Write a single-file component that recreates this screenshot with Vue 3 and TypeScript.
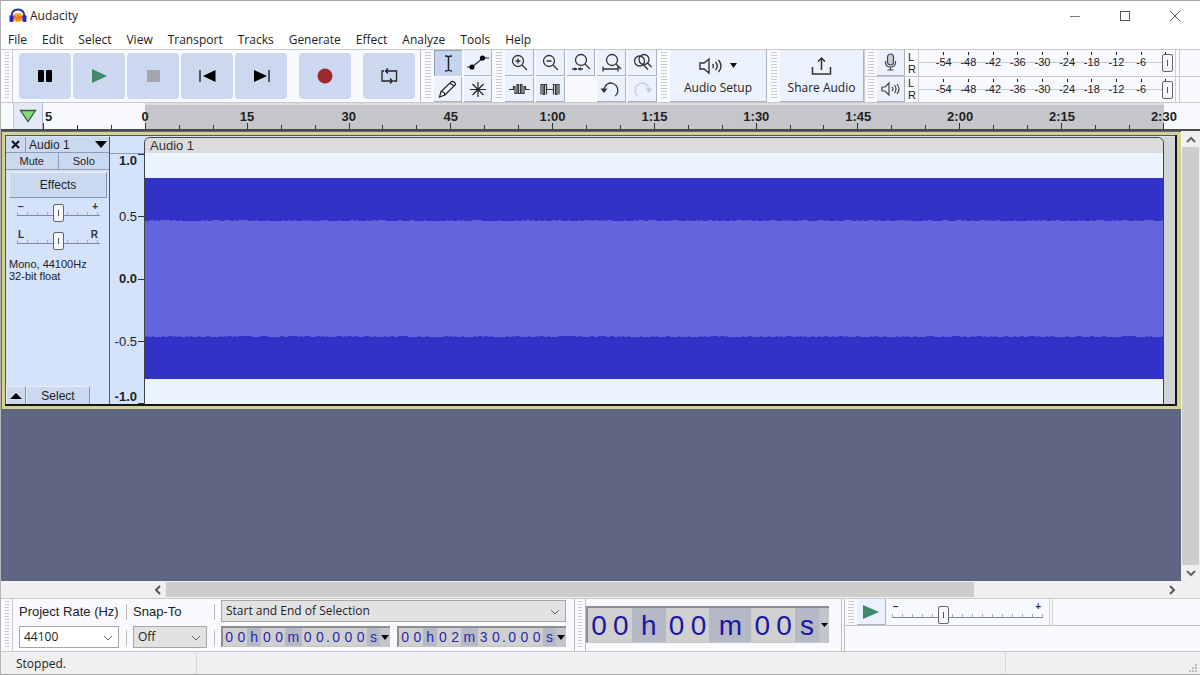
<script setup lang="ts">
import { ref } from 'vue'

const menus = ['File', 'Edit', 'Select', 'View', 'Transport', 'Tracks', 'Generate', 'Effect', 'Analyze', 'Tools', 'Help']

const transport = ['Pause', 'Play', 'Stop', 'Skip to Start', 'Skip to End', 'Record', 'Loop']
const tools = ['Selection Tool', 'Envelope Tool', 'Draw Tool', 'Multi-Tool']
const edits = ['Zoom In', 'Zoom Out', 'Fit Selection', 'Fit Project', 'Zoom Toggle', 'Trim', 'Silence', '', 'Undo', 'Redo']

const meterScale = ['', '-54', '-48', '-42', '-36', '-30', '-24', '-18', '-12', '-6', '0']
const meters = [
  { id: 'rec', name: 'Record meter', level: ref(100) },
  { id: 'play', name: 'Playback meter', level: ref(100) },
]

const timeLabels = ['0', '15', '30', '45', '1:00', '1:15', '1:30', '1:45', '2:00', '2:15', '2:30']
const timeTicks = Array.from({ length: 31 }, (_, i) => i % 3 === 0)
const ampLabels = ['1.0', '0.5', '0.0', '-0.5', '-1.0']

interface Cell { text: string; kind: 'd' | 'u' | 'p' }
function cells(value: string): Cell[] {
  return value.split('').map((c) => ({
    text: c,
    kind: c === '.' ? 'p' : /\d/.test(c) ? 'd' : 'u',
  }))
}
const selStart = cells('00h00m00.000s')
const selEnd = cells('00h02m30.000s')
const position = cells('00h00m00s')

const gain = ref(50)
const pan = ref(50)
const speed = ref(33)

function rmsShape(): string {
  const top: string[] = []
  const bottom: string[] = []
  for (let x = 0; x <= 1020; x += 2) {
    const n = Math.abs(Math.sin(x * 12.9898) * 43758.5453) % 1
    const m = Math.abs(Math.sin(x * 78.233) * 12543.123) % 1
    top.push(`${x},${n > 0.6 ? 67 : 68}`)
    bottom.unshift(`${x},${m > 0.6 ? 183 : 184}`)
  }
  return [...top, ...bottom].join(' ')
}
const rms = rmsShape()
</script>

<template>
  <div class="window">
    <header class="title">
      <svg class="logo" width="18" height="16" viewBox="0 0 18 16">
        <ellipse cx="9" cy="9.500" rx="6" ry="4.500" fill="#f9b02c" />
        <path d="M4 10.500l2-2 1.500 3L9 8l1.500 3.500 1.500-3 2 2" fill="none" stroke="#ee6a1c" stroke-width="1.500" />
        <path d="M2.500 9C2.500 4 5 1.500 9 1.500S15.500 4 15.500 9" fill="none" stroke="#2f3694" stroke-width="1.800" />
        <rect x="0.500" y="7" width="4" height="7" rx="1.500" fill="#2424d0" />
        <rect x="13.500" y="7" width="4" height="7" rx="1.500" fill="#2424d0" />
      </svg>
      <h1>Audacity</h1>
      <div class="controls">
        <button aria-label="Minimize"><svg width="12" height="12"><path d="M1 6.500h10" stroke="#777" /></svg></button>
        <button aria-label="Maximize"><svg width="12" height="12"><rect x="1.500" y="1.500" width="9" height="9" fill="none" stroke="#555" /></svg></button>
        <button aria-label="Close"><svg width="12" height="12"><path d="M1 1l10 10M11 1L1 11" stroke="#555" /></svg></button>
      </div>
    </header>

    <nav class="menu">
      <button v-for="m in menus" :key="m">{{ m }}</button>
    </nav>

    <section class="toolbars">
      <div class="group transport">
        <i class="grip first"></i>
        <div class="transport-buttons">
          <button v-for="(t, i) in transport" :key="t" :aria-label="t" :class="{ apart: i > 4 }">
            <svg width="20" height="20" viewBox="0 0 20 20">
              <template v-if="i === 0"><rect x="3" y="4" width="6" height="12" rx="1" /><rect x="11" y="4" width="6" height="12" rx="1" /></template>
              <path v-else-if="i === 1" d="M3 3l15 7-15 7z" fill="#3d8b6b" />
              <rect v-else-if="i === 2" x="4" y="4" width="13" height="12" fill="#a3a6ad" />
              <template v-else-if="i === 3"><path d="M18.500 4v12L6 10z" /><path d="M3 4v12" stroke="#111" stroke-width="1.300" /></template>
              <template v-else-if="i === 4"><path d="M3 4v12l13-6z" /><path d="M18 4v12" stroke="#111" stroke-width="1.300" /></template>
              <circle v-else-if="i === 5" cx="10" cy="10" r="7.500" fill="#9c2a2c" />
              <path v-else d="M7 5h10.500v10h-3M13 15H3V5h2M9 2.500L6.500 5 9 7.500M11 12.500l2.500 2.500-2.500 2.500" fill="none" stroke="#222" stroke-width="1.300" />
            </svg>
          </button>
        </div>
      </div>

      <div class="group">
        <i class="grip"></i>
        <div class="grid tools">
          <button v-for="(t, i) in tools" :key="t" :aria-label="t" :class="{ down: i === 0 }">
            <svg width="24" height="22" viewBox="0 0 24 22" fill="none" stroke="#222" stroke-width="1.500">
              <path v-if="i === 0" d="M8 4q3 0 3.500 1 .5-1 3.500-1M8 19q3 0 3.500-1 .5 1 3.500 1M11.500 5v13" />
              <template v-else-if="i === 1"><path d="M1 16h5L17 7h6" stroke-width="1.200" /><circle cx="6" cy="16" r="2.600" fill="#000" stroke="none" /><circle cx="16.500" cy="7" r="2.600" fill="#000" stroke="none" /></template>
              <path v-else-if="i === 2" d="M3.500 19l1.500-5.500L15.500 3.500q3.500-.5 4 3L9 17zM5 13.500q3.500 0 4 3.500M13.500 5.500q3.500 0 4 3.500" stroke-width="1.200" />
              <path v-else d="M12 4v15M4 11.500h16M6.500 6l11 11M17.500 6l-11 11" stroke-width="1.200" />
            </svg>
          </button>
        </div>
      </div>

      <div class="group">
        <i class="grip"></i>
        <div class="grid edits">
          <template v-for="(t, i) in edits" :key="i">
            <span v-if="!t"></span>
            <button v-else :aria-label="t">
              <svg width="24" height="22" viewBox="0 0 24 22" fill="none" stroke="#333" stroke-width="1.300">
                <template v-if="i < 2"><circle cx="11" cy="10" r="5.500" /><path d="M15 14l5 5M8.500 10h5" /><path v-if="i === 0" d="M11 7.500v5" /></template>
                <template v-else-if="i === 2"><circle cx="13" cy="9" r="5.500" /><path d="M17 13l5 5M4 18h5M10 18h5" /><path d="M9 18l-2.500-2v4zM10 18l2.500-2v4z" fill="#333" stroke="none" /></template>
                <template v-else-if="i === 3"><circle cx="13" cy="9" r="5.500" /><path d="M17 13l5 5M4 15.500v5M4 18h15M19 15.500v5" /></template>
                <template v-else-if="i === 4"><circle cx="14" cy="8.500" r="5" /><circle cx="9.500" cy="10" r="5" /><path d="M13 13.500l5 5M17.500 12l4 4" /></template>
                <path v-else-if="i === 5" d="M2 11.500h4.500v-3h1.500v7h2v-9h1.500v9h2v-9h1.500v9h2v-7h1.500v3h4" stroke-width="1.200" />
                <path v-else-if="i === 6" d="M3 16.500v-10h2v10h1.500v-10h2v10M8.500 11.500h7M15.500 16.500v-10h2v10h1.500v-10h2v10" stroke-width="1.200" />
                <template v-else-if="i === 8"><path d="M5 12C6 6 10 4 14 5.500C20 8 20 15 16 18" /><path d="M1.500 10.500h7L5 15z" fill="#333" stroke="none" /></template>
                <g v-else stroke="#c6ccd6"><path d="M19 12C18 6 14 4 10 5.500C4 8 4 15 8 18" /><path d="M22.500 10.500h-7L19 15z" fill="#c6ccd6" stroke="none" /></g>
              </svg>
            </button>
          </template>
        </div>
      </div>

      <div class="group">
        <i class="grip"></i>
        <button class="big setup">
          <span class="icon-row">
            <svg width="24" height="20" viewBox="0 0 24 20" fill="none" stroke="#333" stroke-width="1.400"><path d="M1 7v6h4l5 4V3L5 7zM13.500 8q2 2 0 4M16.500 6q3.500 4 0 8M19.500 4q5 6 0 12" /></svg>
            <svg width="7" height="5"><path d="M0 0h7L3.500 5z" fill="#111" /></svg>
          </span>
          Audio Setup
        </button>
      </div>

      <div class="group">
        <i class="grip"></i>
        <button class="big share">
          <span class="icon-row">
            <svg width="22" height="20" viewBox="0 0 22 20" fill="none" stroke="#333" stroke-width="1.500"><path d="M1.500 11v7h18v-7M10.500 14V2M7 5.500L10.500 2 14 5.500" /></svg>
          </span>
          Share Audio
        </button>
      </div>

      <div class="meters">
        <div v-for="(m, k) in meters" :key="m.id" class="meter">
          <i class="grip"></i>
          <button class="meter-button" :aria-label="m.name">
            <svg v-if="k === 0" width="20" height="20" viewBox="0 0 20 20" fill="none" stroke="#444" stroke-width="1.200"><rect x="6.500" y="2" width="6" height="11" rx="3" fill="#c9ced8" /><path d="M4.500 9v2q.5 4 5 4t5-4V9M9.500 15v3M6.500 18h6" /></svg>
            <svg v-else width="20" height="20" viewBox="0 0 20 20" fill="none" stroke="#444" stroke-width="1.200"><path d="M1 8v4h3l4 4V4L4 8zM11 8q2 2 0 4M13.500 6q3 4 0 8M16 5q4 5 0 10" /></svg>
          </button>
          <div class="channels"><span>L</span><span>R</span></div>
          <div class="scale">
            <span v-for="s in meterScale" :key="s" class="mark"><i v-if="s"></i><b>{{ s }}</b></span>
            <input v-model="m.level.value" type="range" :aria-label="m.name + ' level'" class="range level" />
          </div>
          <div class="meter-end"></div>
        </div>
      </div>
    </section>

    <section class="timeline">
      <button class="pin" aria-label="Pinned play head"><svg width="18" height="14" viewBox="0 0 18 14"><path d="M1.500 1.500h15L9 12.500z" fill="#86d97c" stroke="#3c5c3c" stroke-width="1.300" /></svg></button>
      <div class="before"><span>5</span><i class="long"></i><i></i><i></i></div>
      <div class="range-ruler">
        <div class="labels"><span v-for="t in timeLabels" :key="t"><b>{{ t }}</b></span></div>
        <div class="ticks"><i v-for="(major, i) in timeTicks" :key="i" :class="{ long: major }"></i></div>
      </div>
    </section>

    <main class="workspace">
      <div class="canvas">
        <article class="track">
          <aside class="panel">
            <div class="panel-head">
              <button class="close" aria-label="Close track"><svg width="9" height="9"><path d="M1 1l7 7M8 1L1 8" stroke="#111" stroke-width="2" /></svg></button>
              <button class="name">Audio 1<svg width="12" height="7"><path d="M0 0h12L6 7z" /></svg></button>
            </div>
            <div class="mutes"><button>Mute</button><button>Solo</button></div>
            <button class="effects">Effects</button>
            <div class="slider">
              <div class="ends"><span>−</span><span>+</span></div>
              <input v-model="gain" class="range" type="range" aria-label="Gain" />
            </div>
            <div class="slider">
              <div class="ends"><span>L</span><span>R</span></div>
              <input v-model="pan" class="range" type="range" aria-label="Pan" />
            </div>
            <p>Mono, 44100Hz<br />32-bit float</p>
            <div class="panel-foot">
              <button class="collapse" aria-label="Collapse"><svg width="12" height="6"><path d="M0 6h12L6 0z" /></svg></button>
              <button class="select">Select</button>
            </div>
          </aside>
          <div class="amp">
            <div class="amp-scale">
              <div v-for="(a, i) in ampLabels" :key="a" class="amp-mark" :class="{ bold: i % 2 === 0 }"><span>{{ a }}</span><i></i></div>
            </div>
          </div>
          <div class="clip">
            <h2>Audio 1</h2>
            <svg class="wave" viewBox="0 0 1018 251" preserveAspectRatio="none">
              <rect width="1018" height="251" fill="#ebf3ff" />
              <rect y="25" width="1018" height="201" fill="#3231c8" />
              <polygon :points="rms" fill="#6464dc" />
            </svg>
          </div>
          <div class="track-tail"></div>
        </article>
      </div>
      <div class="vscroll">
        <button aria-label="Scroll up"><svg width="10" height="7"><path d="M1 6l4-4 4 4" fill="none" stroke="#666" stroke-width="2" /></svg></button>
        <div class="thumb"></div>
        <button aria-label="Scroll down"><svg width="10" height="7"><path d="M1 1l4 4 4-4" fill="none" stroke="#666" stroke-width="2" /></svg></button>
      </div>
    </main>

    <div class="hscroll">
      <button aria-label="Scroll left"><svg width="7" height="10"><path d="M6 1L2 5l4 4" fill="none" stroke="#555" stroke-width="2" /></svg></button>
      <div class="lane"><div class="thumb"></div></div>
      <button aria-label="Scroll right"><svg width="7" height="10"><path d="M1 1l4 4-4 4" fill="none" stroke="#555" stroke-width="2" /></svg></button>
    </div>

    <section class="bottom">
      <i class="grip first"></i>
      <div class="field rate">
        <label for="rate">Project Rate (Hz)</label>
        <div class="combo white">
          <select id="rate"><option>44100</option></select>
          <svg width="10" height="6"><path d="M1 1l4 4 4-4" fill="none" stroke="#666" /></svg>
        </div>
      </div>
      <div class="seps"><i></i><i></i></div>
      <div class="field snap">
        <label for="snap">Snap-To</label>
        <div class="combo">
          <select id="snap"><option>Off</option></select>
          <svg width="10" height="6"><path d="M1 1l4 4 4-4" fill="none" stroke="#666" /></svg>
        </div>
      </div>
      <div class="seps"><i></i><i></i></div>
      <div class="selection">
        <div class="combo">
          <select aria-label="Selection mode"><option>Start and End of Selection</option></select>
          <svg width="10" height="6"><path d="M1 1l4 4 4-4" fill="none" stroke="#666" /></svg>
        </div>
        <div class="times">
          <div v-for="(row, k) in [selStart, selEnd]" :key="k" class="time">
            <span v-for="(c, i) in row" :key="i" :class="[c.kind, { m: c.text === 'm' }]">{{ c.text }}</span>
            <button aria-label="Time format"><svg width="8" height="5"><path d="M0 0h8L4 5z" /></svg></button>
          </div>
        </div>
      </div>
      <i class="grip lined"></i>
      <div class="time large">
        <span v-for="(c, i) in position" :key="i" :class="[c.kind, { m: c.text === 'm' }]">{{ c.text }}</span>
        <button aria-label="Time format"><svg width="7" height="4"><path d="M0 0h7L3.500 4z" /></svg></button>
      </div>
      <div class="speed-area">
        <div class="speed">
          <i class="grip"></i>
          <button class="play" aria-label="Play at speed"><svg width="16" height="14"><path d="M0 0l16 7-16 7z" fill="#3d8b6b" /></svg></button>
          <div class="slider">
            <div class="ends"><span>−</span><span>+</span></div>
            <input v-model="speed" class="range" type="range" aria-label="Playback speed" />
          </div>
          <i class="speed-end"></i>
        </div>
      </div>
    </section>

    <footer class="status">
      <span class="state">Stopped.</span>
      <span class="message"></span>
      <span class="rest"><svg width="10" height="10" fill="#bbb"><path d="M7 1h2v2h-2zM4 4h2v2h-2zM7 4h2v2h-2zM1 7h2v2h-2zM4 7h2v2h-2zM7 7h2v2h-2z" /></svg></span>
    </footer>
  </div>
</template>

<style>
html, body { margin: 0; }
</style>

<style scoped>
* { box-sizing: border-box; }
.window {
  --lead: 145px;
  --trail: 36px;
  --ui: "Open Sans", "Noto Sans", sans-serif;
  --plain: "Liberation Sans", Arial, sans-serif;
  display: flex;
  flex-direction: column;
  min-height: 100vh;
  background: #fff;
  color: #222;
  font: 12px/16px var(--ui);
  border-top: 1px solid #a5a5a5;
  border-left: 1px solid #b5b5b5;
  border-bottom: 1px solid #a5a5a5;
}
button {
  margin: 0;
  padding: 0;
  border: 0;
  background: none;
  color: inherit;
  font: inherit;
  display: flex;
  align-items: center;
  justify-content: center;
}
svg { display: block; flex: none; }
h1, h2, p { margin: 0; font: inherit; }

.title { display: flex; align-items: center; height: 29px; padding-left: 8px; }
.title h1 { margin-left: 3px; font-size: 12px; font-weight: 500; flex: 1; }
.controls { display: flex; }
.controls button { width: 50px; height: 28px; }

.menu { display: flex; gap: 15px; height: 19px; padding-left: 7px; align-items: center; font-weight: 500; }

.toolbars {
  display: flex;
  gap: 1px;
  height: 54px;
  background: #f8faff;
  border-top: 1px solid #c9c9cc;
  border-bottom: 1px solid #c9c9cc;
  padding-left: 1px;
}
.group { display: flex; }
.grip {
  width: 12px;
  flex: none;
  background: repeating-linear-gradient(#cbcbcd 0 1px, transparent 1px 3px) content-box;
  padding: 2px 3px;
}
.grip.first { width: 11px; padding-left: 3px; border-right: 1px solid #ccc; }
.transport { border-right: 1px solid #bbb; }
.transport-buttons { display: flex; gap: 2px; padding: 3px 5px 3px 6px; }
.transport-buttons button { width: 52px; height: 46px; border-radius: 4px; background: #cbd8ef; }
.transport-buttons .apart { margin-left: 10px; }
.grid { display: grid; grid-template-rows: 1fr 1fr; gap: 1px 2px; }
.tools { grid-template-columns: 1fr 1fr; width: 58px; }
.edits { grid-template-columns: repeat(5, 1fr); width: 152px; }
.grid button, .big, .meter-button, .play {
  background: #ebf2fe;
  border-right: 1px solid #a9b1c2;
  border-bottom: 1px solid #a9b1c2;
}
.grid button.down { background: #c5d5f0; border: 1px solid #93a2bd; border-width: 1px 0 0 1px; }
.big { flex-direction: column; gap: 4px; font-weight: 500; }
.icon-row { display: flex; align-items: center; gap: 7px; height: 20px; }
.setup { width: 97px; }
.share { width: 84px; }

.meters { flex: 1; display: flex; flex-direction: column; border-left: 1px solid #ccc; margin-left: -1px; }
.meter { display: flex; flex: 1; border-bottom: 1px solid #ccc; }
.meter:last-child { border-bottom: 0; }
.meter-button { width: 28px; }
.channels { width: 14px; padding-left: 3px; display: flex; flex-direction: column; justify-content: center; font: 11px/12px var(--plain); border-right: 1px solid #ccc; }
.scale {
  flex: 1;
  position: relative;
  display: flex;
  justify-content: space-between;
  background: linear-gradient(#c8cad0, #c8cad0) 0 12px / 100% 1px no-repeat;
}
.mark { width: 0; display: flex; flex-direction: column; align-items: center; }
.mark i { width: 1px; height: 3px; margin-top: 2px; flex: none; background: #222; }
.mark b { font: 11px/14px var(--plain); white-space: nowrap; color: #222; }
.meter-end { width: 34px; background: linear-gradient(90deg, transparent 9px, #ccc 9px 10px, transparent 10px 13px, #ccc 13px 14px, transparent 14px); }

.range { appearance: none; display: block; width: 100%; height: 18px; margin: 0; background: transparent; }
.range::-webkit-slider-thumb {
  appearance: none;
  width: 11px;
  height: 18px;
  border: 1px solid #666;
  border-radius: 2px;
  background: linear-gradient(#555, #555) center / 1px 6px no-repeat, #f5f7fb;
}
.range.level { position: absolute; top: 4px; left: 0; width: calc(100% + 7px); pointer-events: none; }

.timeline { display: flex; height: 28px; background: #f8faff; border-bottom: 2px solid #4b4b4b; font: bold 13px/16px var(--plain); padding-right: var(--trail); }
.pin { width: 30px; margin-left: 12px; background: #e3e9f7; border-left: 1px solid #ccc; border-right: 1px solid #a8b8dd; }
.before { width: 102px; display: flex; justify-content: space-between; align-items: flex-end; position: relative; padding-right: 33px; }
.before span { position: absolute; left: 2px; top: 6px; }
.before i, .ticks i { width: 1px; height: 4px; background: #333; }
.before i.long, .ticks i.long { height: 6px; }
.range-ruler { flex: 1; display: flex; flex-direction: column; justify-content: space-between; background: #c5c6ca; border-top: 2px solid #dcdde0; }
.labels { display: flex; justify-content: space-between; padding-top: 4px; height: 18px; }
.labels span { width: 0; display: flex; justify-content: center; }
.ticks { display: flex; justify-content: space-between; align-items: flex-end; }

.workspace { flex: 1; display: flex; background: #5f6683; }
.canvas { flex: 1; min-width: 0; }
.track {
  display: flex;
  margin: 1px 0 0 1px;
  border: 3px solid #d3d28e;
  border-right-width: 4px;
  box-shadow: inset -2px -2px 0 #151515, inset 1px 1px 0 #55564c;
  background: #d5e2fc;
  font: 12px/16px var(--plain);
  padding: 2px 2px 2px 1px;
}
.panel { width: 104px; display: flex; flex-direction: column; border-right: 1px solid #555; background: #d5e2fc; }
.panel-head { display: flex; height: 16px; background: #cad8f0; border-bottom: 1px solid #8f9bb3; }
.close { width: 20px; border-right: 1px solid #8f9bb3; }
.name { flex: 1; justify-content: space-between; padding: 0 2px 0 3px; }
.mutes { display: grid; grid-template-columns: 1fr 1fr; height: 17px; background: #cad8f0; border-bottom: 1px solid #8f9bb3; font-size: 11px; }
.mutes button + button { border-left: 1px solid #8f9bb3; }
.effects { margin: 2px 2px 4px 3px; height: 26px; flex: none; background: #cad8f0; border: 1px solid #e8f0ff; border-right-color: #8492ae; border-bottom-color: #8492ae; }
.slider { position: relative; padding: 0 9px 0 11px; height: 28px; }
.slider .ends { display: flex; justify-content: space-between; font: bold 10px/10px var(--plain); padding: 0 2px 0 1px; color: #333; }
.slider .range {
  margin-top: -8px;
  background:
    linear-gradient(#7f8796, #7f8796) 0 11px / 100% 1px no-repeat,
    repeating-linear-gradient(90deg, #a5adbd 0 1px, transparent 1px 10px) 0 8px / 100% 3px no-repeat;
}
.panel .slider .range { position: relative; }
.panel p { font-size: 11px; line-height: 12px; padding: 0 0 0 3px; }
.panel-foot { display: flex; margin-top: auto; height: 18px; }
.panel-foot button { background: #cad8f0; border: 1px solid #e8f0ff; border-right-color: #8492ae; border-bottom: 0; }
.collapse { width: 20px; }
.select { width: 64px; }
.amp { width: 34px; display: flex; flex-direction: column; }
.amp::before { content: ""; height: 16px; flex: none; border-bottom: 1px solid #8f9bb3; }
.amp-scale { flex: 1; display: flex; flex-direction: column; justify-content: space-between; font-size: 13px; line-height: 14px; }
.amp-mark { height: 0; display: flex; align-items: center; justify-content: flex-end; gap: 1px; }
.amp-mark.bold { font-weight: bold; }
.amp-mark:first-child { align-items: flex-start; }
.amp-mark:last-child { align-items: flex-end; }
.amp-mark i { width: 6px; height: 1px; background: #333; }
.clip { flex: 1; min-width: 0; display: flex; flex-direction: column; border: 1px solid #444; border-bottom: 0; border-radius: 6px 6px 0 0; overflow: hidden; }
.clip h2 { height: 15px; padding-left: 5px; font-size: 13px; line-height: 15px; background: #dcdcdc; color: #333; }
.wave { width: 100%; height: 251px; }
.track-tail { width: 11px; background: #d2d5d5; }

.vscroll { width: 19px; padding: 0 1px; background: #f0f0f0; display: flex; flex-direction: column; }
.vscroll button { height: 16px; }
.thumb { flex: 1; background: #cdcdcd; }
.hscroll { display: flex; height: 17px; background: #f0f0f0; padding: 1px 19px 1px 147px; }
.hscroll button { width: 18px; }
.hscroll .lane { flex: 1; display: flex; }
.hscroll .lane .thumb { flex: 0 0 81%; }

.bottom { display: flex; height: 54px; background: #f8faff; border-top: 1px solid #c9c9cc; border-bottom: 1px solid #c9c9cc; padding-left: 1px; }
.field { display: flex; flex-direction: column; padding-top: 4px; }
.field label { font: 13px/18px var(--plain); white-space: nowrap; margin-bottom: 5px; }
.rate { width: 100px; margin-left: 6px; }
.snap { width: 74px; }
.combo { position: relative; height: 22px; border: 1px solid #a6a6a6; background: #e2e2e2; flex: none; }
.combo.white { background: #fff; }
.combo select { appearance: none; width: 100%; height: 100%; border: 0; background: transparent; padding: 0 4px; font: 500 12px/18px var(--ui); color: #222; }
.combo svg { position: absolute; right: 5px; top: 8px; pointer-events: none; }
.seps { width: 14px; display: flex; flex-direction: column; align-items: center; gap: 10px; padding-top: 5px; }
.seps i { width: 1px; height: 16px; background: #bbb; }
.selection { width: 345px; display: flex; flex-direction: column; gap: 4px; padding-top: 1px; }
.times { display: flex; justify-content: space-between; }
.time { display: flex; width: 169px; height: 21px; border: 2px solid #8e8f93; border-right: 0; border-bottom: 1px solid #c5c6ca; color: #2b27b3; font: 14px/18px var(--plain); }
.time span { text-align: center; flex: 12 0 0; background: #d0d1ce; }
.time .u { background: #b5b9c6; flex-grow: 13; }
.time .m { flex-grow: 16; }
.time .p { flex-grow: 4; }
.time button { width: 10px; background: #c3c5cb; color: #000; }
.grip.lined { border-left: 1px solid #bbb; border-right: 1px solid #bbb; margin-left: 8px; }
.time.large { width: 243px; height: 37px; margin: 7px 12px 0 0; font-size: 28px; line-height: 36px; color: #1b17a5; }
.time.large span { flex: 22 0 0; }
.time.large .u { flex-grow: 34; }
.time.large .m { flex-grow: 42; }
.time.large .u:nth-last-child(2) { flex-grow: 24; }
.speed-area { flex: 1; border-left: 4px double #bbb; }
.speed { display: flex; height: 27px; border-bottom: 1px solid #c0c0c0; }
.play { width: 29px; }
.speed .slider { width: 163px; padding: 3px 6px 0; height: 26px; }
.speed .slider .range { margin-top: -6px; position: relative; }
.speed-end { width: 4px; border: 1px solid #ccc; border-width: 0 1px; }

.status { display: flex; height: 22px; background: #f0f0f0; line-height: 24px; }
.state { width: 196px; padding-left: 15px; border-right: 1px solid #d8d8d8; font-weight: 500; }
.message { flex: 1; border-right: 1px solid #d8d8d8; }
.rest { width: 194px; padding: 0 2px 1px 0; display: flex; justify-content: flex-end; align-items: flex-end; }
</style>
